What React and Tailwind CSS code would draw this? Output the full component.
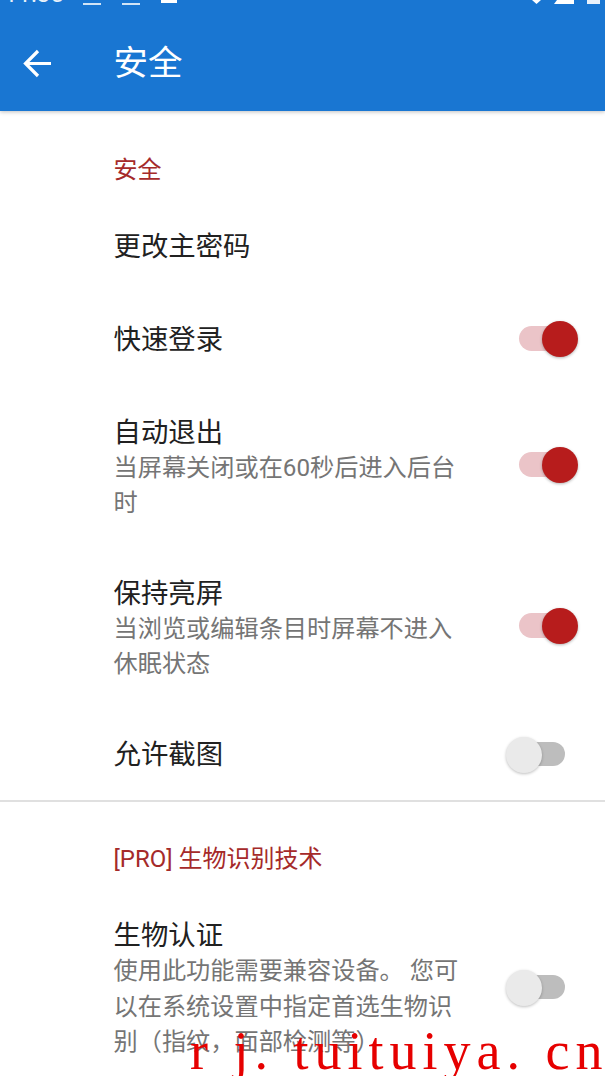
const FONT = "font-['Roboto','Noto_Sans_CJK_SC',sans-serif]"

function Toggle({on}) {
    if (on) {
        return (
            <div className="relative w-[60px] h-[26px] shrink-0">
                <div className="w-[44px] h-[25px] mt-[1px] ml-[1px] rounded-full bg-[#ebc4c8]"/>
                <div className="absolute right-0 top-[-5px] w-[36px] h-[36px] rounded-full bg-[#b71c1c] shadow-[0_1px_3px_rgba(0,0,0,0.3)]"/>
            </div>
        )
    }
    return (
        <div className="relative w-[60px] h-[26px] shrink-0">
            <div className="w-[44px] h-[24px] mt-[1px] ml-[16px] rounded-full bg-[#bdbdbd]"/>
            <div className="absolute left-[1px] top-[-5px] w-[36px] h-[36px] rounded-full bg-[#eaeaea] shadow-[0_1px_3px_rgba(0,0,0,0.25)]"/>
        </div>
    )
}

function Row({title, sub, toggle, toggleClass = "", className = ""}) {
    return (
        <div className={`flex items-center pl-[113.5px] ${className}`}>
            <div className="w-[345px] shrink-0">
                <div className="text-[27.4px] leading-[36px] text-[#212121]">{title}</div>
                {sub && <div className="text-[24.2px] leading-[35px] text-[#757575]">{sub}</div>}
            </div>
            {toggle !== undefined && (
                <div className={`ml-auto ${toggle ? "mr-[27px]" : "mr-[40px]"} ${toggleClass}`}>
                    <Toggle on={toggle}/>
                </div>
            )}
        </div>
    )
}

export default function App() {
    return (
        <div className={`relative w-[605px] h-[1076px] overflow-hidden bg-white ${FONT}`}>
            <header className="h-[111px] bg-[#1976d2] shadow-[0_1px_4px_rgba(0,0,0,0.25)]">
                <div className="flex items-start justify-between h-[5px] overflow-hidden text-white">
                    <div className="flex items-end h-[5px] pl-[4px]">
                        <span className="w-[79px] text-[24px] leading-[24px] mb-[-1px] opacity-90">11:35</span>
                        <span className="w-[18px] h-[2px] bg-white/80"/>
                        <span className="w-[18px] h-[2px] ml-[21px] bg-white/80"/>
                        <span className="w-[16px] h-[3px] ml-[21px] mb-[2px] bg-white"/>
                    </div>
                    <div className="flex items-start gap-[13px] pr-[5px]">
                        <svg width="9" height="4" viewBox="0 0 9 4"><path d="M0 0h9L4.5 4z" fill="#fff"/></svg>
                        <svg width="20" height="4" viewBox="0 0 20 4"><path d="M3 0h17v4H0z" fill="#fff"/></svg>
                        <span className="w-[13px] h-[4px] bg-white/90"/>
                    </div>
                </div>
                <div className="flex items-center h-[106px] pt-[10px]">
                    <svg className="ml-[23px] w-[29px] h-[29px]" viewBox="0 0 29 29" fill="none" stroke="#fff" strokeWidth="3.2">
                        <path d="M28 14.5H2M15 2 2.5 14.5 15 27"/>
                    </svg>
                    <span className="ml-[61.5px] text-[34.5px] leading-[40px] text-white">安全</span>
                </div>
            </header>

            <div className="pl-[113.5px] pt-[44px] text-[24px] leading-[30px] text-[#a52a2a]">安全</div>
            <Row title="更改主密码" className="mt-[44px]"/>
            <Row title="快速登录" toggle={true} toggleClass="mb-[4px]" className="mt-[57px]"/>
            <Row
                title="自动退出"
                sub={<>当屏幕关闭或在60秒后进入后台<br/>时</>}
                toggle={true}
                toggleClass="mb-[8px]"
                className="mt-[57px]"
            />
            <Row
                title="保持亮屏"
                sub={<>当浏览或编辑条目时屏幕不进入<br/>休眠状态</>}
                toggle={true}
                toggleClass="mb-[8px]"
                className="mt-[55px]"
            />
            <Row title="允许截图" toggle={false} toggleClass="mb-[2px]" className="mt-[55px]"/>
            <div className="mt-[27px] h-[2px] bg-[#e0e0e0]"/>
            <div className="pl-[113.5px] mt-[42px] text-[24px] leading-[30px] text-[#a52a2a]">[PRO] 生物识别技术</div>
            <div className="flex items-start pl-[113.5px] mt-[44px]">
                <div className="w-[345px] shrink-0">
                    <div className="text-[27.4px] leading-[36px] text-[#212121]">生物认证</div>
                    <div className="text-[24.2px] leading-[35.5px] text-[#757575]">
                        使用此功能需要兼容设备。 您可<br/>以在系统设置中指定首选生物识<br/>别（指纹，面部检测等）
                    </div>
                </div>
                <div className="ml-auto mr-[40px] mt-[56px]">
                    <Toggle on={false}/>
                </div>
            </div>

            <div className="absolute left-[190px] top-[1021px] whitespace-nowrap font-['Liberation_Serif',serif] text-[54px] leading-[60px] tracking-[6px] text-[#e60000]">
                r j. tuituiya. cn
            </div>
        </div>
    )
}
